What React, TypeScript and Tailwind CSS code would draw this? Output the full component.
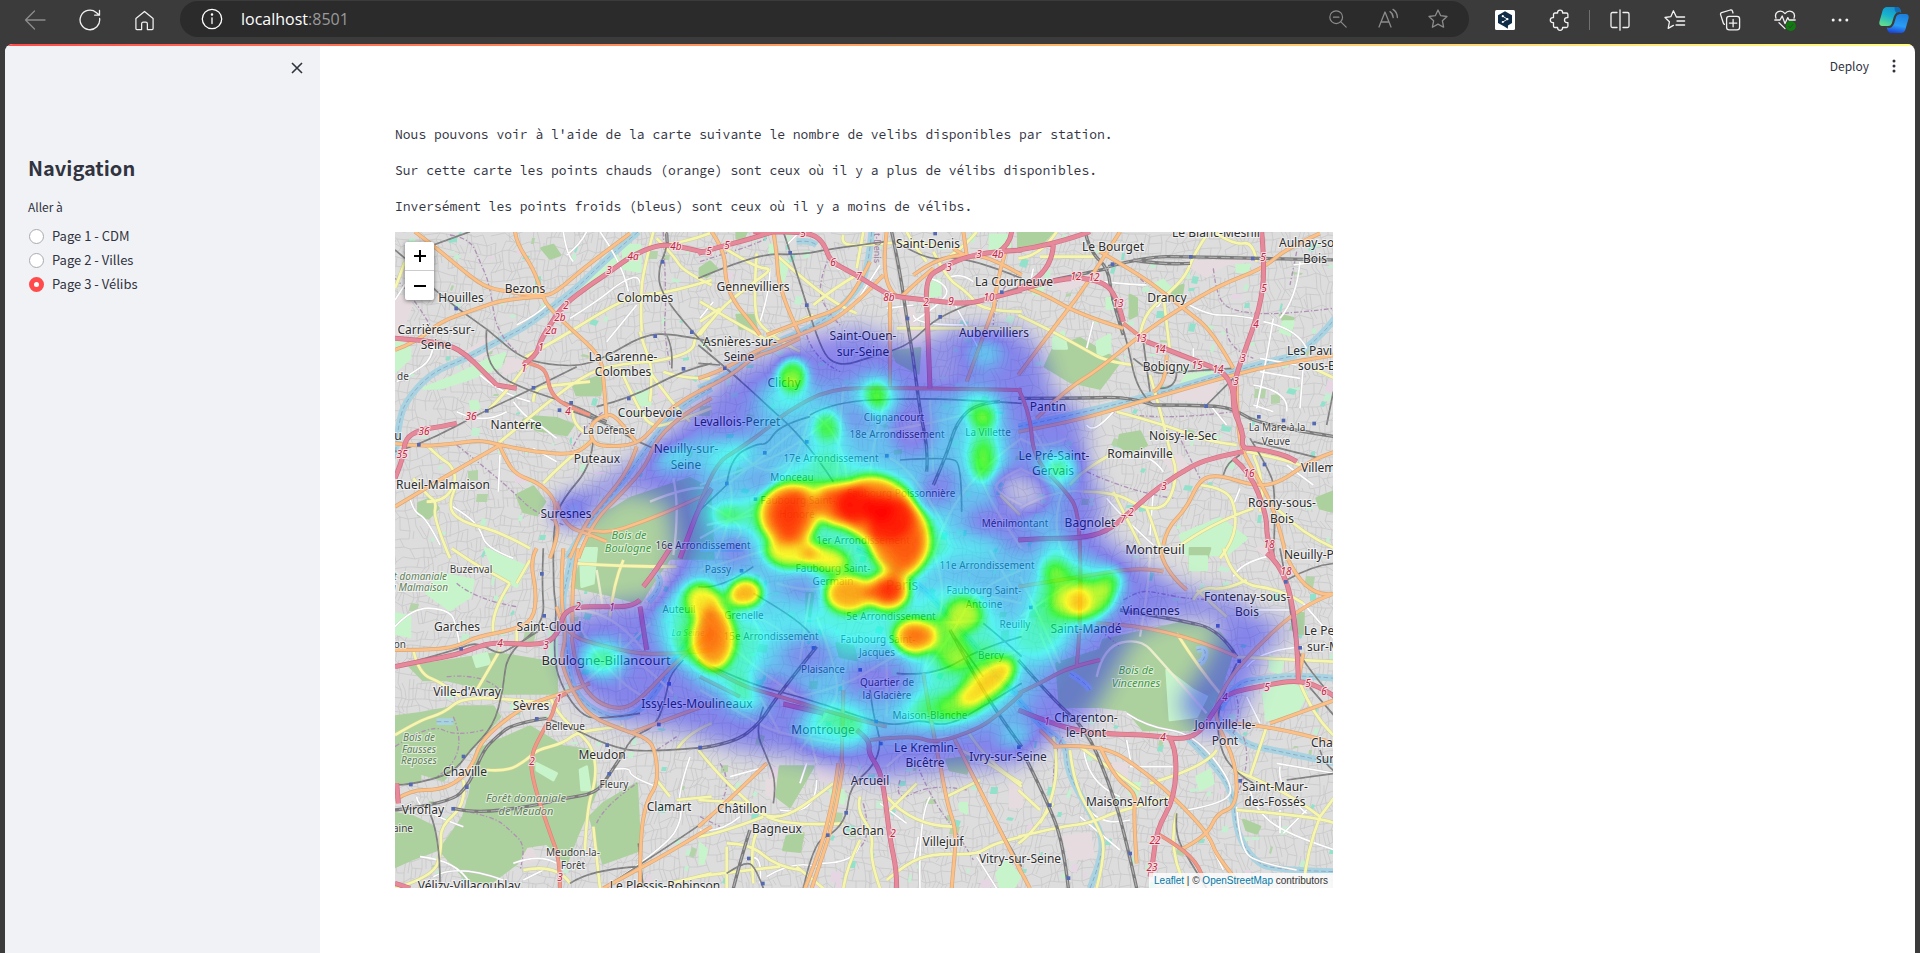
import React from "react";

/* ------------------------------------------------------------------ */
/* Map data: six tiles, each drawn at three units per screen pixel     */
/* ------------------------------------------------------------------ */

type Kind =
  | "park" | "lawn" | "works" | "water" | "border" | "white" | "city"
  | "yellow" | "orange" | "salmon" | "motorway" | "rail" | "yard";

type Label = [text: string, x: number, y: number, style?: string];

interface Tile {
  x: number;
  y: number;
  lines: Partial<Record<Kind, string>>;
  stations: string;
  exits: string;
  labels: Label[];
}

const tiles: Tile[] = [
  {
    x: -5, y: -7,
    lines: {
      park: "380,810 430,785 465,830 440,870 400,860|85,835 125,820 145,850 115,880 85,870|640,870 720,820 900,760 960,790 970,1000 580,1000 600,930|400,585 430,575 500,580 550,600 530,630 440,615|550,480 640,450 630,510 560,510|455,70 490,60 510,90 480,100",
      lawn: "100,490 200,450 300,400 345,385 330,425 230,465 150,490|700,60 750,60 750,140 700,130|540,210 640,120 680,90 690,110 600,190|240,530 262,530 268,550 245,556|15,340 60,370 60,400 15,440|740,500 780,500 780,540 740,540",
      works: "15,220 50,210 65,240 30,330 15,330|215,390 290,340 330,350 270,400|350,400 400,410 390,430 340,450",
      water: "745,20 640,110 560,190 480,250 400,310 320,350 230,400 130,440 60,510 25,580 15,700|965,490 870,540 790,640 720,740 660,820 590,900 530,1000",
      border: "180,30 240,40 270,110 300,180 320,330 380,380|200,660 300,740 380,810 430,860 520,900|15,160 60,200 120,300|820,20 830,230 820,320 840,420|540,690 560,620 640,560",
      white: "630,20 700,120 715,200|520,20 530,90 550,110|130,350 130,400 60,450 20,470|270,450 340,510 420,530|370,530 400,570 450,600 500,640|60,820 70,860 110,880 150,960|330,690 325,800|430,670 500,710|180,840 230,870 270,910 290,970 370,1000|350,560 280,600 200,560|540,280 620,230 700,165 760,150 750,230|380,300 440,270 470,240|650,350 740,240|15,225 80,120 140,60|590,20 570,60 530,90",
      city: "850,760 870,850 850,990|780,830 900,780 960,790",
      yellow: "325,655 480,525 600,440 700,415 800,410 910,380 915,330 960,290|400,400 500,345 620,270 720,215 850,200 965,165|750,320 760,360 790,430 780,530|790,20 770,100 750,200 755,320|800,40 850,90 880,140 965,180|290,560 350,500 400,430 430,400|110,660 150,700 185,720 200,770 160,830 110,830|70,760 110,810 140,830 130,880 180,1000|200,780 170,840 210,890 330,920 420,970|430,530 430,490 500,480 600,470|550,540 540,590 580,620|780,440 840,530 900,590|690,430 730,520 780,610 860,590 965,550|15,190 45,110|820,440 870,460 960,460|460,775 520,710 600,650|810,60 880,55 960,25",
      orange: "75,20 140,70 200,120 280,185 350,200 460,215 500,200 580,130 660,70 720,25|375,20 380,55 430,130 460,215 470,240 540,310 630,390 640,450 650,580|15,375 80,350 150,290 250,255 350,220 460,215|15,655 90,665 200,655 270,645 330,660 430,680 550,690 600,655 610,640|15,845 90,800 200,735 330,660|330,665 350,710 380,750 450,775 500,830 490,880 510,920 480,1000|500,830 520,900 600,930 650,950|965,480 860,530 790,610 740,660 640,665 605,650 600,600 640,570 680,570 740,655|740,665 720,730 640,830 580,900 540,1000|965,800 880,840 760,890 640,930 580,910|965,520 890,560 800,640 770,720 700,800 600,900 565,1000",
      salmon: "400,410 440,420 470,440 480,500 520,540 600,570",
      motorway: "15,340 90,345 180,360 230,390 280,440 320,480|320,480 380,490|400,420 440,390 450,350 480,300 520,240 600,180 660,140 720,95 800,60 860,62 930,80 965,85|15,760 40,700 45,640 90,615 150,605 200,595|965,790 930,840 900,920 870,1000",
      rail: "130,60 240,20|130,190 200,250 290,310 380,390 450,415 560,425 640,400 760,330 850,325 965,350|290,310 285,380 320,450 400,490 520,530 600,560 640,590|15,680 90,660 290,555 430,490 560,425|830,20 835,60 805,130 810,200 905,320 965,380|620,545 720,520 880,435 965,415|830,330 850,370 845,430|610,640 605,720 520,820 490,890 490,1000|15,75 45,100|550,560 640,590 740,650 790,670",
      yard: "590,565 650,590|830,25 832,60",
    },
    stations: "198,250 430,488 290,557 86,659 543,533 508,555 716,520 795,333 880,431 905,321 817,110",
    exits: "4a,730,92 4b,857,64 3,657,135 2,527,240 2b,509,275 2a,484,315 1,452,365 1,402,428 36,242,573 36,101,618 35,36,686 4,535,557",
    labels: [
      ["Houilles", 212, 217], ["Bezons", 406, 190], ["Colombes", 765, 219],
      ["Carrières-sur-", 139, 313], ["Seine", 138, 360], ["La Garenne-", 700, 394],
      ["Colombes", 700, 440], ["Courbevoie", 779, 562], ["Nanterre", 378, 598],
      ["La Défense", 657, 616, "s"], ["Puteaux", 621, 700], ["Rueil-Malmaison", 158, 779],
      ["Suresnes", 528, 866], ["de", 40, 453, "s"], ["u", 23, 633],
      ["Bois de", 716, 930, "g"], ["Boulogne", 714, 970, "g"],
      ["Neuilly-sur-", 889, 671], ["Seine", 889, 718], ["16e Arrondissement", 938, 962, "s"],
    ],
  },
  {
    x: 305, y: -7,
    lines: {
      park: "0,130 30,110 50,130 20,155 0,150|580,380 660,370 655,445 590,410|110,20 140,20 130,40 110,40|110,270 160,270 170,310 120,310",
      lawn: "870,30 930,30 930,65 870,75|685,165 720,165 720,210 685,215|240,100 265,110 250,170 240,160|210,60 225,60 225,85 210,85",
      works: "320,330 400,330 410,410 360,390|600,250 640,250 690,470 650,470|500,20 545,20 540,60 505,80",
      water: "515,20 505,130 470,200 400,265 330,310 230,350 150,400 60,465 -5,490|290,50 330,45 350,60",
      border: "390,90 350,180 380,260 420,300|0,110 60,90 160,60 200,40|960,140 880,200 880,300|320,330 340,400 420,440",
      white: "210,130 210,200 180,290|0,280 40,230|410,130 470,150|470,230 540,120|690,160 730,170 750,220 640,290|640,270 640,300 790,300|740,160 780,140 820,170|760,230 800,300 840,380|300,20 260,60|560,250 640,240",
      city: "0,780 120,740 300,660 400,570|80,780 260,640 350,560|120,680 200,780 280,700|430,480 410,760|330,560 430,620 440,760|570,490 520,620 510,750|965,640 780,770 730,910|830,700 830,780 965,970|730,900 700,1000|690,520 700,740|0,830 160,900 110,940|20,900 160,870|965,730 900,760 880,800 965,840|0,940 160,850|50,1000 110,830 90,780|240,780 310,670 330,560|470,630 700,600 820,560|570,700 640,730 730,900",
      yellow: "75,70 170,130 220,130 150,180 50,260 0,330|170,85 160,230 180,320 300,380|235,95 330,180 430,250 470,265|0,230 100,290 210,350|340,240 400,190 470,150|490,20 470,130|590,310 680,310 800,310 965,310|430,30 420,60 500,60 600,50 700,60|700,80 740,160 800,200 850,260 965,260|200,340 250,310 340,270|620,20 640,60 680,110|0,290 60,250|830,20 800,60 740,100|960,870 900,810",
      orange: "35,20 75,80 75,160 100,230 160,300 180,330|220,20 230,80 235,170 270,270 300,330|560,20 545,140 590,230 640,180 700,130|200,330 300,290 400,260 440,230 480,170 510,110|550,150 440,270 300,330 180,370 60,440 -5,460|570,220 570,490|760,70 800,100 860,90 965,150|640,150 720,90 800,90|880,250 800,470|790,20 800,90|-5,500 90,455 160,395 230,375 300,340|920,70 890,160 880,260",
      motorway: "-5,85 60,65 140,45 220,20|160,20 250,20 340,25 375,60 390,110 470,150 540,195 580,215 680,225 800,238 870,220 965,195|680,230 675,160 730,125 800,95 880,80 965,75|680,230 685,350 690,490|935,20 930,60 890,85",
      salmon: "-5,850 40,720 120,670 190,620 260,560 390,490 560,490 700,490 965,495",
      rail: "250,20 270,80 320,240 360,360 390,410 440,420 500,400 600,370 640,345 720,270 900,205 965,185|-5,160 170,85 300,90 400,70 560,50|-5,360 80,430 190,530 320,650 400,770|330,570 400,530 640,520 800,525 965,535|600,705 750,695 785,720 785,860|-5,415 60,420|80,780 90,700 170,655 200,660 240,600 330,575|-5,860 80,780|590,50 680,110 790,90 965,160",
      yard: "575,20 600,140 620,280 640,400 660,560 685,680 680,740|700,780 740,690 770,590 830,535 900,530",
    },
    stations: "270,83 320,240 74,429 622,280 720,275 905,201 320,650 194,683 560,692 166,822 80,775 705,25",
    exits: "5,28,79 5,82,61 5,310,25 6,399,112 7,477,152 8b,568,215 2,678,232 3,748,125 9,753,228 10,868,217 3,836,88 4b,893,86",
    labels: [
      ["Saint-Denis", 685, 57], ["Gennevilliers", 160, 186], ["Asnières-sur-", 120, 349],
      ["Seine", 118, 395], ["Saint-Ouen-", 490, 333], ["sur-Seine", 490, 380],
      ["La Courneuve", 942, 170], ["Aubervilliers", 882, 322], ["Clichy", 253, 472],
      ["Levallois-Perret", 111, 590], ["Clignancourt", 582, 577, "s"],
      ["18e Arrondissement", 590, 628, "s"], ["La Villette", 864, 622, "s"],
      ["17e Arrondissement", 392, 700, "s"], ["Monceau", 275, 757, "s"],
      ["Faubourg Poissonnière", 603, 806, "s"], ["Faubourg Saint-", 295, 827, "s"],
      ["Honoré", 292, 868, "s"], ["1er Arrondissement", 490, 945, "s"],
      ["Ménilmontant", 945, 894, "s"],
    ],
  },
  {
    x: 625, y: -7,
    lines: {
      park: "-5,20 100,20 60,60 -5,70|100,370 180,340 300,410 240,490 150,470 75,425|300,630 360,620 380,660 330,685 295,660|460,190 490,180 485,210 455,215|780,270 820,280 800,300|890,820 940,800 940,860 900,850|550,920 610,890 610,930 550,940|330,210 350,220 350,270 330,280",
      lawn: "480,930 600,880 680,940 620,990 500,990|400,180 430,165 450,190 420,200|230,350 270,330 270,380 235,395|260,220 280,220 280,250 260,250|790,290 820,290 810,330 780,320|100,340 130,320 140,370 100,370|650,120 690,120 680,140 650,140|500,450 600,440 560,470 480,480|40,180 70,190 60,210 40,205",
      works: "500,110 700,105 610,120 560,155 520,130|500,480 600,465 570,530 460,520|430,700 480,690 500,720 460,740|90,160 200,140 230,160 130,200",
      water: "-5,605 300,540 500,480|500,480 700,420 830,390|830,390 900,340 945,280",
      border: "580,130 590,220 640,260 780,270 940,250|620,310 620,370 700,400|340,140 380,180|200,740 330,800 460,820|470,620 540,760|830,80 810,180|270,560 420,590 640,560",
      white: "40,130 30,180|430,200 420,260 400,240|250,170 340,180 380,180|490,230 560,270 640,270 700,280|840,110 830,220 780,280|760,280 740,400 710,550|700,480 810,500 800,560|620,600 570,540|730,290 830,310 860,370|850,420 840,550|520,370 520,400|200,600 220,630 280,560|300,700 380,670 430,740|400,800 390,930|260,820 300,870 400,960|660,790 640,840|800,720 880,780|720,400 830,420|720,440 840,460|700,540 760,560|220,290 200,370|820,120 900,110",
      city: "30,600 80,680 130,780|0,730 60,760 130,790|0,850 110,790 190,800|130,790 90,900 130,990|0,640 60,680 140,640",
      yellow: "110,20 60,95 -5,100|60,95 230,95|560,30 520,90 500,150 440,210 370,270 360,330|580,20 640,60 700,50 710,110|430,210 450,380|390,450 430,590 450,680 470,730 460,800 430,850 370,850 280,800 190,800|290,560 440,600 560,650 650,660|-5,270 80,310 190,370 260,410 340,420|270,690 180,740 150,780|280,800 360,960|380,850 400,900 430,1000|540,780 620,790 650,860 640,950 600,1000|700,690 740,780 720,860|680,680 780,700 840,720|770,850 850,930 945,970|880,430 945,460|470,970 560,900 700,850",
      orange: "300,20 230,130 170,220 100,310 -5,450|240,80 360,150 440,210 490,250 580,320 640,430|900,25 800,70 730,130 600,180 480,250 360,330 240,430 130,500 50,580|-5,180 60,200 180,270 310,310|-5,620 160,590 360,530 500,490 640,450 760,420 945,390|650,440 650,640 690,720 770,860 800,1000|440,390 440,480 400,500|945,680 880,700 770,780 690,780 600,750 540,760 500,850 440,910 430,960",
      motorway: "210,20 100,60 -5,75|100,60 95,150 -5,190|-5,195 130,155 240,165 290,210 310,290|380,350 470,385 560,420 610,440 640,490 640,560 670,620 665,670 700,670 800,690 830,710|725,20 735,130 720,250 670,390 645,460 640,540 670,640|670,680 560,700 470,750 400,800 320,870 260,920 180,940 60,940 -5,945|640,700 690,740 740,870 740,940 760,1000",
      salmon: "310,295 380,350|-5,490 30,560 40,700 130,790 180,860 180,1000",
      rail: "340,400 400,450 470,440 640,430|275,220 320,330 350,500 400,540|370,350 380,430 390,500|560,540 640,460|690,640 740,720 770,800 760,1000|610,750 620,710 660,690|700,650 820,680 900,700|-5,185 60,200 180,270 310,310|940,500 920,600|470,440 470,490 420,490",
      yard: "195,20 210,80 265,130 275,220 310,330|265,125 380,95 500,95 700,100 945,105|340,105 430,120 510,115|100,165 265,130|400,540 550,540 640,550 720,600 945,635|-5,520 180,520 330,515 400,540",
    },
    stations: "277,117 512,95 698,100 558,543 716,575 790,586 882,595 733,718",
    exits: "12,167,152 12,223,157 13,294,233 13,362,340 14,421,372 15,532,419 14,594,433 5,730,97 5,733,190 4,708,297 3,669,400 3,649,468 3,432,783 2,334,860 7,310,883 16,687,745 18,747,958",
    labels: [
      ["Le Blanc-Mesnil", 587, 22], ["Aulnay-so", 777, 53, "start"], ["Bois", 885, 100],
      ["Le Bourget", 280, 66], ["Drancy", 441, 217], ["Les Pavi", 802, 376, "start"],
      ["sous-B", 835, 423, "start"], ["Bobigny", 438, 424], ["Pantin", 84, 546],
      ["La Mare à la", 770, 607, "s"], ["Veuve", 768, 648, "s"], ["Noisy-le-Sec", 490, 632],
      ["Romainville", 361, 686], ["Villem", 843, 729, "start"], ["Le Pré-Saint-", 103, 692],
      ["Gervais", 100, 738], ["Bagnolet", 210, 892], ["Rosny-sous-", 785, 833],
      ["Bois", 785, 880], ["Montreuil", 406, 972, "l"], ["Neuilly-P", 793, 990, "start"],
    ],
  },
  {
    x: -5, y: 318,
    lines: {
      park: "15,500 90,490 200,470 310,470 330,500 260,580 160,690 90,670 15,700|260,600 420,530 470,560 520,590 600,600 620,720 560,860 530,940 470,880 410,890 380,940 300,1000 230,990 150,900 220,800 240,730|60,350 320,310 500,340 500,430 340,430 170,390 100,390|640,760 740,700 750,900 640,940 600,800|590,-5 860,-5 800,80 750,160 640,130 545,110|15,790 70,800 130,830 140,900 60,930 15,950|15,600 90,590 90,690 15,700",
      lawn: "110,130 150,70 250,90 240,140 180,180|285,-5 410,50 380,110 320,80|15,190 60,200 60,260 15,250|570,-5 620,-5 610,100 575,110|440,640 500,670 490,690 440,660|570,660 590,650 600,720 575,720|480,240 500,260 500,340 480,330|250,320 290,310 300,340 260,350",
      works: "570,430 640,470 630,500 580,480|500,640 560,640 550,680 500,670|380,900 420,890 440,930 400,940",
      water: "550,-5 530,90 515,160 530,280 540,400 590,470 680,510 760,480 840,360 900,250 965,190|785,60 815,80 800,130 775,155|140,515 190,515",
      border: "200,100 260,150 380,170|15,590 120,520 200,560 280,540|190,500 240,620 140,680|210,780 310,800 360,840 410,890 390,960|620,820 640,770 740,700|800,600 860,560|170,380 280,370 330,420",
      white: "15,230 70,170 180,180 200,230 210,290|90,920 200,930 240,1000|80,740 80,780 220,830|370,940 450,910 500,940|640,1015 830,890 880,800 860,740 900,620|660,660 720,650 720,680 800,710|130,980 200,940 340,990|400,990 460,960",
      city: "510,190 640,150 760,300|660,290 740,320 850,430|570,230 650,380 760,440|640,180 620,60|690,250 690,420|580,400 700,300 780,220",
      yellow: "185,-5 250,40 290,60 360,100|380,100 420,30|360,100 300,190 310,250|15,555 90,510 160,490 220,440 390,450 480,460|70,300 85,370 160,400 210,440|330,300 260,420|480,440 500,490 580,560 610,600 620,680 590,780 585,900|290,660 350,665 410,630 440,600 520,580 570,540 700,530|220,690 230,760 150,830 155,900 130,980 15,1015|965,740 860,750|800,690 840,740|660,200 670,100 700,30|560,40 700,50 860,50|610,830 630,1015|400,960 500,940 540,1000|840,1000 965,970|860,600 890,550 965,520|380,235 380,290",
      orange: "440,-5 420,30 440,130 430,210 370,240 260,260 200,290 120,300 15,300|15,750 60,720 150,720 210,690 250,640 270,580 330,520 420,460 520,430 600,400|520,-5 510,130 530,260 510,330 550,430 600,500 700,540 760,560 795,590 805,700 770,750 750,860 750,1015|565,-5 540,100 550,260|500,170 520,250 640,290 800,320 965,300|965,830 850,900 740,960 640,1015|545,260 560,380 620,460 700,480 760,440 860,330 965,250|720,550 800,520 880,490 965,460",
      salmon: "530,430 500,440 490,490 460,540 420,620 430,700 480,850 510,930 510,1015",
      motorway: "15,350 110,330 200,315 290,280 350,280 470,285 510,240 520,190 560,170 640,170 730,170 750,150|760,110 800,60 840,-5|750,170 770,300|15,1000 60,1015|20,700 25,760",
      rail: "460,-5 455,100 465,220 350,310 340,420 310,530 240,600 190,670 60,705 15,705|490,-5 490,120 500,170 490,330 520,420 570,490 620,510 750,490|15,350 200,300 260,275 320,310 350,305 450,240|470,505 560,540 650,585 760,610 965,590|120,790 150,860 150,1000|760,1015 745,880|965,800 850,880 640,1015|700,610 720,560 800,530 830,430 840,370 880,330|540,1000 600,960 740,950",
      yard: "470,505 370,520 320,560 280,600 240,700 180,760 15,780|190,775 250,790 420,770 520,745 620,730 660,670 700,610",
    },
    stations: "455,71 462,197 213,296 440,506 651,585 837,401 806,523 220,619 62,703 230,711 189,776 657,671 930,592",
    exits: "2,565,169 1,667,171 4,329,280 3,467,286 1,508,443 2,425,632 3,511,982",
    labels: [
      ["Buzenval", 242, 59, "s"], ["êt domaniale", 172, 79, "f end"], ["a Malmaison", 174, 112, "f end"],
      ["Garches", 200, 230], ["Saint-Cloud", 477, 230], ["on", 47, 284, "s end"],
      ["Boulogne-Billancourt", 648, 330, "l"], ["Ville-d'Avray", 232, 426], ["Sèvres", 423, 466],
      ["Bellevue", 524, 529, "s"], ["Bois de", 87, 563, "f"], ["Fausses", 87, 597, "f"],
      ["Reposes", 87, 630, "f"], ["Meudon", 635, 615], ["Chaville", 224, 665],
      ["Fleury", 672, 704, "s"], ["Forêt domaniale", 408, 743, "F"], ["de Meudon", 408, 783, "F"],
      ["Viroflay", 98, 780], ["aine", 69, 834, "s end"], ["Clamart", 836, 769],
      ["Meudon-la-", 549, 907, "s"], ["Forêt", 549, 946, "s"], ["Vélizy-Villacoublay", 237, 1007],
      ["Le Plessis-Robinson", 825, 1007], ["Issy-les-Moulineaux", 921, 462],
      ["Auteuil", 866, 178, "s"], ["La Seine", 895, 249, "w"],
    ],
  },
  {
    x: 305, y: 318,
    lines: {
      park: "240,650 340,650 270,770 230,740|410,280 460,290 470,330 420,320|740,630 810,620 800,670 750,660|260,860 310,850 300,905 250,900|320,130 340,130 330,200 320,190",
      lawn: "890,970 920,930 960,980 940,1015 900,1010|780,760 800,760 800,790 780,780|390,720 430,720 430,760 400,750|0,880 20,900 10,940 0,940",
      works: "350,650 410,650 400,700 360,690|200,690 230,690 220,750 200,730|930,700 965,720 965,770 930,770",
      water: "0,-5 130,-5|470,-5 570,40 690,130 760,220 830,290 900,400 965,440",
      border: "60,640 100,700 60,760|490,760 520,870 470,900|600,690 580,760 700,700 800,720|650,640 690,740 780,860 820,930|0,800 60,830",
      white: "90,680 200,650|240,780 350,800 350,690|0,840 60,850 120,800|360,940 470,940 480,880|540,760 620,820|660,1015 655,800 690,740|300,700 320,640|140,930 190,900 180,1000|830,920 890,1015|640,940 655,860|200,980 280,930 350,950",
      city: "0,60 100,30 200,0|0,180 110,330 300,440|300,440 430,410 560,330 640,290|230,100 330,130 430,90 450,0|100,80 180,250|350,200 430,400 380,500 300,600|540,200 700,230 850,210|670,370 760,250 830,110 965,60|0,420 120,490 250,560 430,580|560,340 560,500|690,370 860,340 965,300|700,0 740,120 700,260 670,370|780,120 965,160|870,0 940,120|30,180 170,180 250,250|430,590 430,390|560,650 650,560 760,560|240,550 180,440|330,130 300,330|330,560 350,640",
      yellow: "-5,600 60,680 150,760 190,800 260,800 350,740 400,700|190,800 60,850 -5,860|200,800 260,830 430,820|170,850 150,880 160,1000|80,880 150,880 230,950 300,960|-5,980 60,970 240,950|480,740 470,780 520,850 510,930 540,1015|560,740 640,830 760,830|965,860 880,880 830,915 700,910 620,940 560,990|430,1015 440,950 480,870|965,710 880,640 780,600|740,740 840,690|650,700 570,780|800,540 870,650 965,700|80,890 80,1015|-5,750 150,760|290,950 370,1015",
      orange: "415,640 405,720 375,850 345,940 315,1015|430,640 418,720 390,850 360,940 335,1015|720,640 740,760 770,840 760,960 755,1015|200,640 100,740 -5,830|670,370 690,500 720,650|760,560 830,700 965,970|430,420 425,640",
      motorway: "470,540 510,570 505,610 540,660 555,740 570,870 590,960 590,1015|250,462 370,490",
      salmon: "-5,330 100,400 240,440 470,510 560,530|510,570 640,555 700,580 800,550 880,510 965,430|0,380 60,410 120,440",
      rail: "190,470 165,540 200,620 230,700 220,760|-5,330 140,400 300,440 450,490 560,525 620,520 660,510 740,530 850,470 965,400|510,420 520,500 545,580 520,650 450,710 440,800 400,850 340,880 310,1015|760,560 830,690 900,840 965,950|850,220 900,260 965,320|80,970 140,930 170,960 190,1015|160,130 300,210 330,250|590,370 700,380 850,290 965,260|200,640 100,740 -5,830|-5,110 60,120 160,50|760,960 757,1015|850,380 750,240",
      yard: "-5,595 100,580 180,520 230,440 350,290|750,240 830,390 900,500 965,590|150,840 130,900 100,1015",
    },
    stations: "340,293 480,359 528,514 542,580 438,788 383,855 146,925 188,1000 956,591 124,62",
    exits: "2,579,850",
    labels: [
      ["Passy", 53, 57, "s"], ["Faubourg Saint-", 400, 54, "s"], ["Germain", 400, 94, "s"],
      ["Paris", 606, 106, "P"], ["11e Arrondissement", 862, 46, "s"], ["Faubourg Saint-", 852, 122, "s"],
      ["Antoine", 852, 162, "s"], ["Grenelle", 132, 195, "s"], ["5e Arrondissement", 572, 200, "s"],
      ["15e Arrondissement", 213, 259, "s"], ["Faubourg Saint-", 533, 268, "s"],
      ["Jacques", 532, 308, "s"], ["Bercy", 872, 316, "s"], ["Reuilly", 944, 222, "s"],
      ["Plaisance", 368, 358, "s"], ["Quartier de", 560, 397, "s"], ["la Glacière", 560, 437, "s"],
      ["Maison-Blanche", 690, 496, "s"], ["Montrouge", 368, 540], ["Le Kremlin-", 677, 592],
      ["Bicêtre", 676, 638], ["Ivry-sur-Seine", 923, 621], ["Arcueil", 510, 692],
      ["Châtillon", 125, 776], ["Bagneux", 230, 836], ["Cachan", 488, 842],
      ["Villejuif", 728, 875], ["Vitry-sur-Seine", 959, 927],
    ],
  },
  {
    x: 625, y: 318,
    lines: {
      park: "110,340 240,300 250,270 480,220 600,250 640,300 600,420 540,540 370,540 320,480 240,470 120,470|510,-5 570,-5 560,30 510,60|835,190 850,190 850,250 835,250|670,810 720,830 710,850 680,840",
      lawn: "730,430 800,390 860,430 830,490 740,510|440,360 520,420 560,440 530,500 450,510|750,320 790,330 780,370 750,360|530,680 570,660 580,700 540,720|510,20 560,20 560,60 510,60|330,700 360,700 350,740 330,730",
      works: "280,640 320,640 320,680 280,680|130,860 210,850 220,920 150,930|710,-5 760,-5 740,20",
      water: "-5,450 60,530 140,580 140,660 200,770 250,860 240,940 210,1015|600,480 640,400 740,385 840,375 945,385|590,500 660,580 760,600 945,640|500,560 600,660 640,740 650,850 700,930 760,960 945,965|530,300 560,290 550,340 530,340|150,370 200,400 210,420",
      border: "310,150 360,120 420,130 520,150 650,150|100,700 100,600 130,560|640,550 670,470 640,420|670,560 700,640 640,760|240,240 300,290",
      white: "320,490 380,530 520,550 640,700 620,760 500,780|190,590 200,700 300,740|200,770 240,830 330,810|320,570 335,650|650,770 660,900 720,940 830,960|690,720 700,770 790,850 945,900|640,80 660,40 740,20|700,180 820,180|680,350 720,300 850,290|770,640 945,670|780,780 780,850|860,780 790,850|560,860 610,960|850,160 945,270|180,800 300,900|780,650 770,720 860,790|330,650 460,650|680,440 720,520",
      city: "230,380 250,290 360,265 420,330 560,490|390,-5 390,90 360,260|0,200 180,80|0,80 60,200 120,340|30,170 0,270|60,250 110,370",
      yellow: "470,250 540,360 600,430|-5,860 120,830 210,820 300,780 460,740|180,590 360,720|150,600 160,700 230,820 260,900 230,1015|-5,880 30,860 100,760|390,700 560,650 590,600|650,780 900,800 945,820|900,800 860,900 850,1015|945,740 900,800|640,660 800,720 900,800|740,530 690,680|610,-5 640,100 790,120 850,160|640,320 945,335|530,120 620,200|520,150 540,110 620,120 680,90|100,560 130,700 60,820|470,790 440,900 500,1015|840,400 880,500 945,560|-5,720 60,780",
      orange: "800,20 860,150 945,130|945,130 850,160 670,330 600,430 580,500 650,640 650,770 590,790 560,860 480,900|230,220 440,225 650,320|100,590 240,580 370,660 490,770 570,860 590,920 670,1015|240,590 280,680 350,730 340,790 350,940|610,520 740,520 945,580|750,520 945,450|420,-5 430,60 500,120|-5,950 30,1015|835,390 850,310|-5,110 180,80 370,50 430,65|60,540 110,590",
      salmon: "410,850 480,890 540,950 550,990|180,-5 185,200 170,350|-5,430 60,400 150,350 240,330",
      motorway: "-5,480 80,515 200,550 400,555 480,570 540,550 590,470 620,430 740,405 830,390 900,410 945,440|450,565 470,600 465,740 410,840 400,930 390,980|740,10 790,50 830,220 835,390",
      rail: "780,-5 800,100 820,250 840,330 945,450|650,340 600,440 590,560 630,660 700,700|470,790 465,850 500,920 560,1015|800,690 945,670|900,600 910,640 945,665|945,40 880,45 800,90|850,390 945,500",
      yard: "-5,330 100,450 200,540 260,680 310,830 350,1015|20,630 80,750 130,880 145,1015|300,180 480,210 600,240 650,320",
    },
    stations: "797,95 840,293 657,333 593,227 660,692 89,765 330,910 145,984 32,172",
    exits: "18,797,62 1,80,514 4,430,560 5,740,410 4,615,440 5,865,400 6,912,423 22,405,870 23,397,950",
    labels: [
      ["Vincennes", 393, 182], ["Fontenay-sous-", 681, 139], ["Bois", 681, 186],
      ["Saint-Mandé", 198, 236], ["Bois de", 348, 360, "g"], ["Vincennes", 348, 400, "g"],
      ["Le Pe", 853, 243, "start"], ["sur-M", 862, 290, "start"], ["Charenton-", 198, 503],
      ["le-Pont", 198, 549], ["Joinville-le-", 614, 524], ["Pont", 614, 571],
      ["Cha", 872, 578, "start"], ["sur", 887, 626, "start"], ["Maisons-Alfort", 321, 756],
      ["Saint-Maur-", 766, 709], ["des-Fossés", 766, 755],
    ],
  },
];

type Point = [number, number];

const parse = (line: string): Point[] =>
  line.trim().split(" ").map((p) => p.split(",").map(Number) as Point);

/* Open curve through the midpoints of the given points. */
function curve(data: string): string {
  return data
    .split("|")
    .map((line) => {
      const p = parse(line);
      let d = `M${p[0][0]} ${p[0][1]}`;
      for (let i = 1; i < p.length - 1; i++) {
        const end = i === p.length - 2;
        const mx = end ? p[i + 1][0] : (p[i][0] + p[i + 1][0]) / 2;
        const my = end ? p[i + 1][1] : (p[i][1] + p[i + 1][1]) / 2;
        d += `Q${p[i][0]} ${p[i][1]} ${mx} ${my}`;
      }
      if (p.length === 2) d += `L${p[1][0]} ${p[1][1]}`;
      return d;
    })
    .join("");
}

const area = (data: string): string =>
  data.split("|").map((l) => "M" + parse(l).map((q) => q.join(" ")).join("L") + "Z").join("");

function random(seed: number) {
  let s = seed;
  return () => {
    s = (s * 1664525 + 1013904223) % 4294967296;
    return s / 4294967296;
  };
}

/* Side streets: an irregular mesh over the whole map. */
function streetMesh(): string {
  const rnd = random(7);
  const step = 9;
  const cols = 108;
  const rows = 76;
  const pts: Point[][] = [];
  for (let r = 0; r < rows; r++) {
    const row: Point[] = [];
    for (let c = 0; c < cols; c++) {
      const bx = c * step + 7 * Math.sin(r / 5 + c / 9);
      const by = r * step + 8 * Math.sin(c / 6 - r / 8);
      row.push([Math.round(bx + rnd() * 6 - 10), Math.round(by + rnd() * 6 - 8)]);
    }
    pts.push(row);
  }
  let d = "";
  for (let r = 0; r < rows - 1; r++)
    for (let c = 0; c < cols - 1; c++) {
      const [x, y] = pts[r][c];
      if (rnd() > 0.15) d += `M${x} ${y}L${pts[r][c + 1].join(" ")}`;
      if (rnd() > 0.15) d += `M${x} ${y}L${pts[r + 1][c].join(" ")}`;
      if (rnd() > 0.6) d += `M${x + 4} ${y}L${pts[r + 1][c][0] + 4} ${pts[r + 1][c][1]}`;
    }
  return d;
}

function patches(seed: number, count: number, size: number): string {
  const rnd = random(seed);
  let d = "";
  for (let i = 0; i < count; i++) {
    const x = Math.round(rnd() * 938);
    const y = Math.round(rnd() * 656);
    const w = 2 + Math.round(rnd() * size);
    const h = 2 + Math.round(rnd() * size);
    const k = Math.round(rnd() * 3);
    d += `M${x} ${y}l${w} ${k - 1}l${-k} ${h}l${-w} ${1 - k}Z`;
  }
  return d;
}

const mesh = streetMesh();

const strokes: { kind: Kind; passes: { color: string; width: number; dash?: string; opacity?: number }[] }[] = [
  { kind: "water", passes: [{ color: "#a9d3e0", width: 20 }, { color: "#7f97bd", width: 2, dash: "14 8" }] },
  { kind: "border", passes: [{ color: "#b091b6", width: 4, dash: "14 6 4 6" }] },
  { kind: "white", passes: [{ color: "#c8c8c8", width: 7 }, { color: "#ffffff", width: 5 }] },
  { kind: "city", passes: [{ color: "#f3f1d2", width: 7, opacity: 0.9 }] },
  { kind: "yellow", passes: [{ color: "#cfd09a", width: 11 }, { color: "#f6f6ae", width: 8 }] },
  { kind: "rail", passes: [{ color: "#7d7d7d", width: 5 }, { color: "#a9a9a9", width: 1, dash: "14 14" }] },
  { kind: "yard", passes: [{ color: "#7b7b7b", width: 10 }, { color: "#b5b5b5", width: 3, dash: "26 12" }] },
  { kind: "orange", passes: [{ color: "#d9a777", width: 12 }, { color: "#fbc189", width: 8 }] },
  { kind: "salmon", passes: [{ color: "#d98580", width: 12 }, { color: "#f09a86", width: 8 }] },
  { kind: "motorway", passes: [{ color: "#d16d83", width: 15 }, { color: "#e68a9b", width: 11 }] },
];

const tileTransform = (t: Tile) => `translate(${t.x} ${t.y}) scale(0.33333)`;

const labelLook: Record<string, { size: number; fill: string; italic?: boolean }> = {
  n: { size: 12, fill: "#2e2e2e" },
  s: { size: 10, fill: "#3d3d3d" },
  l: { size: 13, fill: "#2e2e2e" },
  P: { size: 14, fill: "#555555" },
  g: { size: 11, fill: "#3f9a3f", italic: true },
  f: { size: 10, fill: "#5f7f58", italic: true },
  F: { size: 11, fill: "#5f7f58", italic: true },
  w: { size: 9, fill: "#4d80b3", italic: true },
};

function TileLabels({ tile }: { tile: Tile }) {
  return (
    <g>
      {tile.exits.split(" ").map((e, i) => {
        const [text, x, y] = e.split(",");
        return (
          <text
            key={i}
            x={Math.round(tile.x + Number(x) / 3)}
            y={Math.round(tile.y + Number(y) / 3) + 4}
            textAnchor="middle"
            fontSize={10}
            fontStyle="italic"
            fill="#bf2440"
            stroke="#f5dfe2"
            strokeWidth={2}
            paintOrder="stroke"
          >
            {text}
          </text>
        );
      })}
      {tile.labels.map(([text, x, y, style = "n"], i) => {
        const look = labelLook[style.split(" ")[0]] ?? labelLook.n;
        const anchor = style.includes("start") ? "start" : style.includes("end") ? "end" : "middle";
        return (
          <text
            key={i}
            x={Math.round(tile.x + x / 3)}
            y={Math.round(tile.y + y / 3 + look.size * 0.36)}
            textAnchor={anchor}
            fontSize={look.size}
            fontStyle={look.italic ? "italic" : "normal"}
            fill={look.fill}
            stroke="#ffffff"
            strokeOpacity={0.6}
            strokeWidth={2}
            paintOrder="stroke"
          >
            {text}
          </text>
        );
      })}
    </g>
  );
}

/* Heat spots: x, y, rx, ry, strength, rotation */
const wideSpots: number[][] = [
  [465, 418, 14, 14, 0.25, 0], [492, 538, 20, 16, 0.42, 0], [585, 368, 30, 16, 0.2, 0],
  [547, 374, 16, 12, 0.3, 0], [716, 322, 18, 18, 0.25, 0], [640, 322, 24, 14, 0.18, 0],
  [805, 288, 14, 14, 0.25, 0], [803, 333, 18, 14, 0.28, 0], [803, 370, 15, 26, 0.26, 0],
  [868, 382, 16, 14, 0.38, 0], [595, 420, 22, 14, 0.16, 0], [560, 508, 28, 34, 0.24, 0],
  [880, 486, 40, 24, 0.26, -12], [640, 510, 26, 20, 0.1, 0], [700, 505, 40, 26, 0.16, 0],
  [775, 515, 44, 36, 0.18, 0], [790, 560, 46, 28, 0.18, -30], [680, 596, 30, 20, 0.3, 0],
  [610, 570, 16, 14, 0.25, 0], [760, 582, 28, 12, 0.2, 0], [830, 602, 16, 12, 0.25, 0],
  [864, 462, 14, 24, 0.2, 0], [690, 430, 84, 54, 0.2, 10], [1040, 515, 18, 16, 0.12, 0],
  [985, 582, 22, 20, 0.05, 0], [675, 360, 16, 24, 0.16, 0], [848, 520, 24, 20, 0.2, 0],
  [785, 448, 30, 10, 0.12, 0], [590, 530, 34, 34, 0.2, 0],
];

const hotSpots: number[][] = [
  [647, 305, 13, 14, 0.5, 0], [676, 348, 11, 12, 0.24, 0], [716, 323, 8, 11, 0.24, 0],
  [803, 341, 11, 8, 0.24, 0], [803, 376, 9, 16, 0.2, 0], [594, 420, 12, 7, 0.18, 0],
  [884, 490, 26, 15, 0.34, -6], [908, 474, 10, 11, 0.28, 20], [860, 466, 10, 9, 0.2, 0],
  [881, 492, 9, 10, 0.36, 0],
  [806, 557, 29, 14, 0.42, -38], [810, 555, 20, 8, 0.3, -38], [785, 575, 18, 12, 0.2, 0],
  [774, 525, 14, 24, 0.28, -35], [787, 502, 15, 14, 0.4, 0],
  [747, 520, 17, 14, 0.66, 0], [747, 519, 9, 8, 0.4, 0],
  [693, 485, 19, 15, 0.66, 0], [725, 483, 18, 15, 0.72, 0], [726, 482, 11, 10, 0.7, 0],
  [583, 522, 17, 25, 0.66, 0], [583, 521, 8, 14, 0.25, 0], [574, 490, 14, 15, 0.48, -20],
  [609, 484, 14, 12, 0.7, 0], [591, 492, 14, 10, 0.25, 0],
  [644, 420, 24, 25, 0.72, 0], [644, 420, 14, 17, 0.6, 0],
  [646, 450, 21, 13, 0.48, 0], [674, 456, 20, 10, 0.48, 15], [664, 402, 18, 9, 0.35, 0],
  [690, 412, 25, 18, 0.75, 0], [716, 416, 32, 26, 0.72, 20], [734, 438, 25, 32, 0.74, -10],
  [718, 416, 14, 13, 0.8, 0], [690, 412, 12, 11, 0.55, 0], [738, 442, 14, 18, 0.35, -10],
  [738, 468, 10, 8, 0.2, 0],
];

const coldSpots: number[][] = [
  [835, 402, 20, 14, 0.75, 20], [745, 350, 16, 20, 0.32, 0], [640, 566, 22, 9, 0.4, 25],
  [765, 400, 12, 18, 0.25, 40], [812, 425, 22, 10, 0.3, 0], [600, 350, 20, 10, 0.15, 0],
  [770, 300, 12, 16, 0.2, 0], [655, 478, 14, 10, 0.2, 0], [716, 555, 26, 14, 0.28, 0],
  [625, 395, 14, 8, 0.2, 0], [835, 440, 16, 8, 0.25, 0], [700, 340, 14, 12, 0.15, 0],
  [660, 535, 20, 14, 0.2, 0], [600, 450, 12, 10, 0.25, 0], [835, 370, 10, 16, 0.2, 0],
];

function Spots({ list, fill }: { list: number[][]; fill: string }) {
  return (
    <>
      {list.map(([x, y, rx, ry, a, rot], i) => (
        <ellipse key={i} cx={x} cy={y} rx={rx} ry={ry} fill={fill} fillOpacity={a} transform={`rotate(${rot} ${x} ${y})`} />
      ))}
    </>
  );
}

function HeatLayer() {
  return (
    <g filter="url(#heat-colours)">
      <g transform="translate(-395 -232) scale(1.2245)">
        <g mask="url(#heat-mask)">
          <path
            filter="url(#blur-wide)"
            fillOpacity={0.4}
            d="M662 276L702 268L745 284L785 268L832 268L852 290L860 322L884 335L888 380L902 410L898 436L925 455L965 480L1010 490L1040 515L1028 545L1012 590L985 600L962 575L985 540L1000 505L950 505L925 520L912 545L890 585L858 605L828 625L770 630L712 636L650 618L600 612L560 598L500 588L468 562L456 530L462 505L500 494L540 488L552 450L545 410L508 400L478 425L456 425L452 412L500 388L535 366L560 340L598 304Z"
          />
          <path
            filter="url(#blur-wide)"
            fillOpacity={0.22}
            d="M598 350L640 308L690 316L715 306L745 330L800 312L826 350L868 380L866 440L912 466L902 510L860 545L836 588L780 598L700 606L640 575L600 580L545 535L545 490L574 440L566 385Z"
          />
          <g filter="url(#blur-mid)">
            <Spots list={wideSpots} fill="#000000" />
          </g>
        </g>
        <g filter="url(#blur-hot)">
          <Spots list={hotSpots} fill="#000000" />
        </g>
      </g>
    </g>
  );
}

function ParisMap() {
  return (
    <svg viewBox="0 0 938 656" className="block w-full" role="img" aria-label="Carte des vélibs disponibles" fontFamily='"Noto Sans", sans-serif'>
      <defs>
        <filter id="blur-wide" x="-20%" y="-20%" width="140%" height="140%"><feGaussianBlur stdDeviation="9" /></filter>
        <filter id="blur-mid" x="-20%" y="-20%" width="140%" height="140%"><feGaussianBlur stdDeviation="7" /></filter>
        <filter id="blur-hot" x="-20%" y="-20%" width="140%" height="140%"><feGaussianBlur stdDeviation="4.5" /></filter>
        <filter id="heat-colours" filterUnits="userSpaceOnUse" x="0" y="0" width="938" height="656" colorInterpolationFilters="sRGB">
          <feColorMatrix type="matrix" values="0 0 0 1 0  0 0 0 1 0  0 0 0 1 0  0 0 0 1 0" />
          <feComponentTransfer>
            <feFuncR type="table" tableValues="0 0 0 0 0 0 0 0 1 1 1" />
            <feFuncG type="table" tableValues="0 0 0 0 0 0.5 1 1 1 0.5 0" />
            <feFuncB type="table" tableValues="1 1 1 1 1 1 1 0 0 0 0" />
          </feComponentTransfer>
        </filter>
        <mask id="heat-mask" maskUnits="userSpaceOnUse" x="300" y="180" width="800" height="560">
          <rect x="300" y="180" width="800" height="560" fill="#ffffff" />
          <g filter="url(#blur-mid)"><Spots list={coldSpots} fill="#000000" /></g>
        </mask>
      </defs>
      <rect width="938" height="656" fill="#dddddd" />
      <path d={mesh} stroke="#c6c6c6" strokeWidth={0.7} fill="none" />
      <path d={patches(3, 260, 6)} fill="#c4efd0" />
      <path d={patches(11, 150, 6)} fill="#92e2cb" />
      <path d={patches(29, 80, 9)} fill="#b4d3a9" />
      <path d={patches(41, 60, 10)} fill="#e6d6e3" />
      {tiles.map((t, i) => (
        <g key={i} transform={tileTransform(t)} strokeLinejoin="round" strokeWidth={8}>
          <path d={area(t.lines.works ?? "")} fill="#e6dcdf" stroke="#e6dcdf" />
          <path d={area(t.lines.park ?? "")} fill="#add19e" stroke="#add19e" />
          <path d={area(t.lines.lawn ?? "")} fill="#c8f4cb" stroke="#c8f4cb" />
        </g>
      ))}
      {strokes.flatMap(({ kind, passes }) =>
        passes.map((pass, p) => (
          <g key={kind + p} fill="none" stroke={pass.color} strokeOpacity={pass.opacity} strokeWidth={pass.width} strokeDasharray={pass.dash} strokeLinejoin="round">
            {tiles.map((t, i) => {
              const data = t.lines[kind];
              return data ? <path key={i} d={curve(data)} transform={tileTransform(t)} /> : null;
            })}
          </g>
        )),
      )}
      {tiles.map((t, i) => (
        <g key={i} transform={tileTransform(t)} fill="#5468b4">
          {parse(t.stations).map(([x, y], k) => (
            <rect key={k} x={x - 5} y={y - 5} width={11} height={11} />
          ))}
        </g>
      ))}
      {tiles.map((t, i) => (
        <TileLabels key={i} tile={t} />
      ))}
      <text transform="translate(479 1) rotate(90)" fontSize={9} fill="#9a7aa0">t-Denis</text>
      <HeatLayer />
    </svg>
  );
}

/* ------------------------------------------------------------------ */
/* Browser toolbar                                                     */
/* ------------------------------------------------------------------ */

function Icon({ size = 22, children }: { size?: number; children: React.ReactNode }) {
  return (
    <svg width={size} height={size} viewBox="0 0 22 22" fill="none" stroke="currentColor" strokeWidth="1.3" strokeLinecap="round" strokeLinejoin="round" aria-hidden="true">
      {children}
    </svg>
  );
}

function ToolButton({ label, width = "w-[55px]", dim, children }: { label: string; width?: string; dim?: boolean; children: React.ReactNode }) {
  return (
    <button type="button" aria-label={label} className={`flex h-9 shrink-0 items-center justify-center ${width} ${dim ? "text-[#8c8c8c]" : "text-[#f2f2f2]"}`}>
      {children}
    </button>
  );
}

const starPath = "M11 2L13.7 7.7L20 8.5L15.4 12.8L16.6 19.2L11 16.1L5.4 19.2L6.6 12.8L2 8.5L8.3 7.7Z";

const ribbon = "M8 0H18.4Q21.4 0.4 22.2 5.4Q19 4.6 17.2 6Q15.6 7.4 14.8 9.8L12.8 16.4Q11.8 19 9 19H3Q-0.4 18.6 0.5 14.5L3.6 3.5Q4.8 0 8 0Z";

function Toolbar() {
  return (
    <header className="flex h-11 items-start pt-px pl-[7px]">
      <div className="flex pt-px">
        <ToolButton label="Retour" dim>
          <Icon><path d="M21 11H1.5M10.5 2L1.5 11L10.5 20" /></Icon>
        </ToolButton>
        <ToolButton label="Actualiser">
          <Icon><path d="M20.6 9.5A9.8 9.8 0 1 1 17.2 3.4L20.3 6M20.5 1.4V6.2H15.7" /></Icon>
        </ToolButton>
        <ToolButton label="Accueil">
          <Icon size={21}><path d="M2 9L11 1.5L20 9V19.5Q20 20.5 19 20.5H14V14.5Q14 12.8 12.3 12.8H9.7Q8 12.8 8 14.5V20.5H3Q2 20.5 2 19.5Z" /></Icon>
        </ToolButton>
      </div>
      <div className="ml-2 flex h-9 flex-1 items-center rounded-full bg-[#2b2b2b] pr-1.5 pl-[21px] text-white">
        <Icon>
          <circle cx="11" cy="11" r="9.7" />
          <path d="M11 9.8V15.6" />
          <circle cx="11" cy="6.6" r="0.6" fill="currentColor" />
        </Icon>
        <div className="ml-[18px] flex-1 font-['Open_Sans',sans-serif] text-base">
          localhost<span className="text-[#9a9a9a]">:8501</span>
        </div>
        <ToolButton label="Zoom arrière" width="w-[50px]" dim>
          <Icon size={20}><circle cx="9" cy="9" r="7" /><path d="M14.2 14.2L20 20M6 9H12" /></Icon>
        </ToolButton>
        <ToolButton label="Lecture à voix haute" width="w-[50px]" dim>
          <Icon><path d="M2 19L8 4L14 19M4.2 14H11.8M13 3.6Q16 5.4 16.2 9.6M16 1.4Q20.2 4 20.4 9.6" /></Icon>
        </ToolButton>
        <ToolButton label="Ajouter aux favoris" width="w-[50px]" dim>
          <Icon><path d={starPath} /></Icon>
        </ToolButton>
      </div>
      <div className="ml-2 flex items-center pt-px">
        <ToolButton label="DeepL">
          <svg width="20" height="20" viewBox="0 0 20 20" aria-hidden="true">
            <rect width="20" height="20" rx="1.5" fill="#ffffff" />
            <path d="M10 1.2L17 5.2V13L13 15.4L12.8 18.8L9.4 16.6L3 13V5.2Z" fill="#0f2b46" />
            <path d="M7.8 6.2L12.4 9.2L7.8 12" stroke="#ffffff" strokeWidth="0.9" fill="none" />
            <circle cx="7.8" cy="6.2" r="1.1" fill="#ffffff" /><circle cx="12.4" cy="9.2" r="1.1" fill="#ffffff" /><circle cx="7.8" cy="12" r="1.1" fill="#ffffff" />
          </svg>
        </ToolButton>
        <ToolButton label="Extensions">
          <Icon><path d="M6 4H8.6V3.6A2.5 2.5 0 0 1 13.6 3.6V4H17.4Q18.9 4 18.9 5.5V8.6H18A2.5 2.5 0 0 0 18 13.6H18.9V17Q18.9 18.5 17.4 18.5H13.6V18.8A2.5 2.5 0 0 1 8.6 18.8V18.5H6Q4.5 18.5 4.5 17V13.6H3.8A2.5 2.5 0 0 1 3.8 8.6H4.5V5.5Q4.5 4 6 4Z" /></Icon>
        </ToolButton>
        <div className="flex w-[5px] justify-center"><span className="h-5 w-px bg-[#707070]" /></div>
        <ToolButton label="Écran partagé">
          <Icon><path d="M11 0.8V21.2M8 3.5H3.5Q2 3.5 2 5V17Q2 18.5 3.5 18.5H8M14 3.5H18.5Q20 3.5 20 5V17Q20 18.5 18.5 18.5H14" /></Icon>
        </ToolButton>
        <ToolButton label="Favoris">
          <Icon><path d="M12.4 8L9.4 1.8L6.8 7.7L1 8.5L5.4 12.8L4.2 19.4L9.4 16.4M12.4 8H20.6M13 12H20.6M12 16H20.6" /></Icon>
        </ToolButton>
        <ToolButton label="Collections">
          <Icon><path d="M5.4 15.4Q4.6 15 4.3 14L1.6 5.6Q1.2 4.2 2.6 3.6L11.4 1Q12.9 0.7 13.4 2L14 4" /><rect x="7.6" y="7.4" width="13" height="13.4" rx="2.6" /><path d="M14.1 10.4V17.8M10.4 14.1H17.8" /></Icon>
        </ToolButton>
        <ToolButton label="Performances">
          <Icon>
            <path d="M2 9.2Q0.4 4.8 3.8 2.8Q7.8 0.8 11 4.6Q14.2 0.8 18.2 2.8Q21.6 4.8 20 9.2M0.8 11H6L8.2 7L11 14.6L13.8 8.6L15 11H21.2M5 13.8L11 19.6" />
            <circle cx="16.8" cy="17" r="5" fill="#107c10" stroke="none" />
            <path d="M14.6 17.2L16.2 18.8L19 15.4" stroke="#3b3b3b" strokeWidth="1" />
          </Icon>
        </ToolButton>
        <ToolButton label="Paramètres">
          <Icon><g fill="currentColor" stroke="none"><circle cx="4.2" cy="11" r="1.5" /><circle cx="11" cy="11" r="1.5" /><circle cx="17.8" cy="11" r="1.5" /></g></Icon>
        </ToolButton>
        <ToolButton label="Copilot" width="w-[53px]">
          <svg width="30" height="26" viewBox="0 0 30 26" aria-hidden="true">
            <defs>
              <linearGradient id="ribbon-left" x1="0.7" y1="0" x2="0.3" y2="1"><stop offset="0" stopColor="#168fd2" /><stop offset="0.5" stopColor="#17b4cc" /><stop offset="1" stopColor="#62dc8c" /></linearGradient>
              <linearGradient id="ribbon-right" x1="0.6" y1="0" x2="0.4" y2="1"><stop offset="0" stopColor="#1c44d8" /><stop offset="0.4" stopColor="#2a9df4" /><stop offset="1" stopColor="#1b7fdc" /></linearGradient>
            </defs>
            <path d={ribbon} transform="rotate(180 15 13)" fill="url(#ribbon-right)" />
            <path d={ribbon} fill="url(#ribbon-left)" />
            <path d="M15.6 0H18.4Q21.4 0.4 22.2 5.4Q19 4.6 17.2 6Q15 3.6 15.6 0Z" fill="#0f5fae" fillOpacity="0.75" />
          </svg>
        </ToolButton>
      </div>
    </header>
  );
}

/* ------------------------------------------------------------------ */
/* Application                                                         */
/* ------------------------------------------------------------------ */

const pages = ["Page 1 - CDM", "Page 2 - Villes", "Page 3 - Vélibs"];

const notes = [
  "Nous pouvons voir à l'aide de la carte suivante le nombre de velibs disponibles par station.",
  "Sur cette carte les points chauds (orange) sont ceux où il y a plus de vélibs disponibles.",
  "Inversément les points froids (bleus) sont ceux où il y a moins de vélibs.",
];

function Sidebar() {
  const [page, setPage] = React.useState(pages[2]);
  return (
    <aside className="w-[315px] shrink-0 bg-[#f0f2f6] px-[23px] text-[#31333f]">
      <div className="flex h-11 items-center justify-end">
        <button type="button" aria-label="Fermer" className="-mr-3 flex h-6 w-6 items-center justify-center">
          <svg width="12" height="12" viewBox="0 0 12 12" stroke="#31333f" strokeWidth="1.6" aria-hidden="true"><path d="M1 1L11 11M11 1L1 11" /></svg>
        </button>
      </div>
      <h1 className="mt-15 text-[20px] leading-9 font-bold">Navigation</h1>
      <fieldset className="mt-[11px]">
        <legend className="text-[12px] leading-5">Aller à</legend>
        <div className="mt-[7px]">
          {pages.map((name) => (
            <label key={name} className="flex h-6 items-center gap-2 pl-px text-[13px]">
              <input
                type="radio"
                name="page"
                checked={page === name}
                onChange={() => setPage(name)}
                className="h-[15px] w-[15px] appearance-none rounded-full border border-[#a9abb2] bg-white checked:border-[5px] checked:border-[#ff4b4b]"
              />
              <span>{name}</span>
            </label>
          ))}
        </div>
      </fieldset>
    </aside>
  );
}

export default function App() {
  return (
    <div className="flex min-h-screen flex-col bg-[#3b3b3b] font-['Noto_Sans_CJK_SC',sans-serif]">
      <Toolbar />
      <div className="mx-[5px] flex flex-1 flex-col overflow-hidden rounded-t-lg bg-white">
        <div className="h-0.5 bg-gradient-to-r from-[#ff4b4b] to-[#fffd80]" />
        <div className="flex flex-1">
          <Sidebar />
          <main className="min-w-0 flex-1">
            <div className="flex h-10 items-center justify-end gap-[18px] pr-3.5 text-[#31333f]">
              <button type="button" className="text-[12px]">Deploy</button>
              <button type="button" aria-label="Menu" className="flex h-6 w-3.5 items-center justify-center">
                <svg width="4" height="14" viewBox="0 0 4 14" fill="#31333f" aria-hidden="true"><circle cx="2" cy="2" r="1.5" /><circle cx="2" cy="7" r="1.5" /><circle cx="2" cy="12" r="1.5" /></svg>
              </button>
            </div>
            <div className="px-[75px] pt-[31px] pb-12">
              {notes.map((note) => (
                <p key={note} className="font-['Source_Code_Pro','Liberation_Mono',monospace] text-[13px] leading-9 text-[#31333f]">{note}</p>
              ))}
              <div className="relative mt-[7px] w-full max-w-[938px] overflow-hidden">
                <ParisMap />
                <div className="absolute top-2.5 left-2.5 flex flex-col overflow-hidden rounded-xs bg-white shadow-[0_1px_4px_rgba(0,0,0,0.5)]">
                  <button type="button" aria-label="Zoomer" className="flex h-[29px] w-[29px] items-center justify-center border-b border-[#cccccc]">
                    <svg width="12" height="12" viewBox="0 0 12 12" stroke="#000000" strokeWidth="2" aria-hidden="true"><path d="M6 0V12M0 6H12" /></svg>
                  </button>
                  <button type="button" aria-label="Dézoomer" className="flex h-[29px] w-[29px] items-center justify-center">
                    <svg width="12" height="12" viewBox="0 0 12 12" stroke="#000000" strokeWidth="2" aria-hidden="true"><path d="M0 6H12" /></svg>
                  </button>
                </div>
                <div className="absolute right-0 bottom-0 bg-white/80 px-[5px] font-['Liberation_Sans',sans-serif] text-[10px] leading-[15px] text-[#333333]">
                  <a href="#leaflet" className="text-[#0078a8]">Leaflet</a> | © <a href="#osm" className="text-[#0078a8]">OpenStreetMap</a> contributors
                </div>
              </div>
            </div>
          </main>
        </div>
      </div>
    </div>
  );
}
